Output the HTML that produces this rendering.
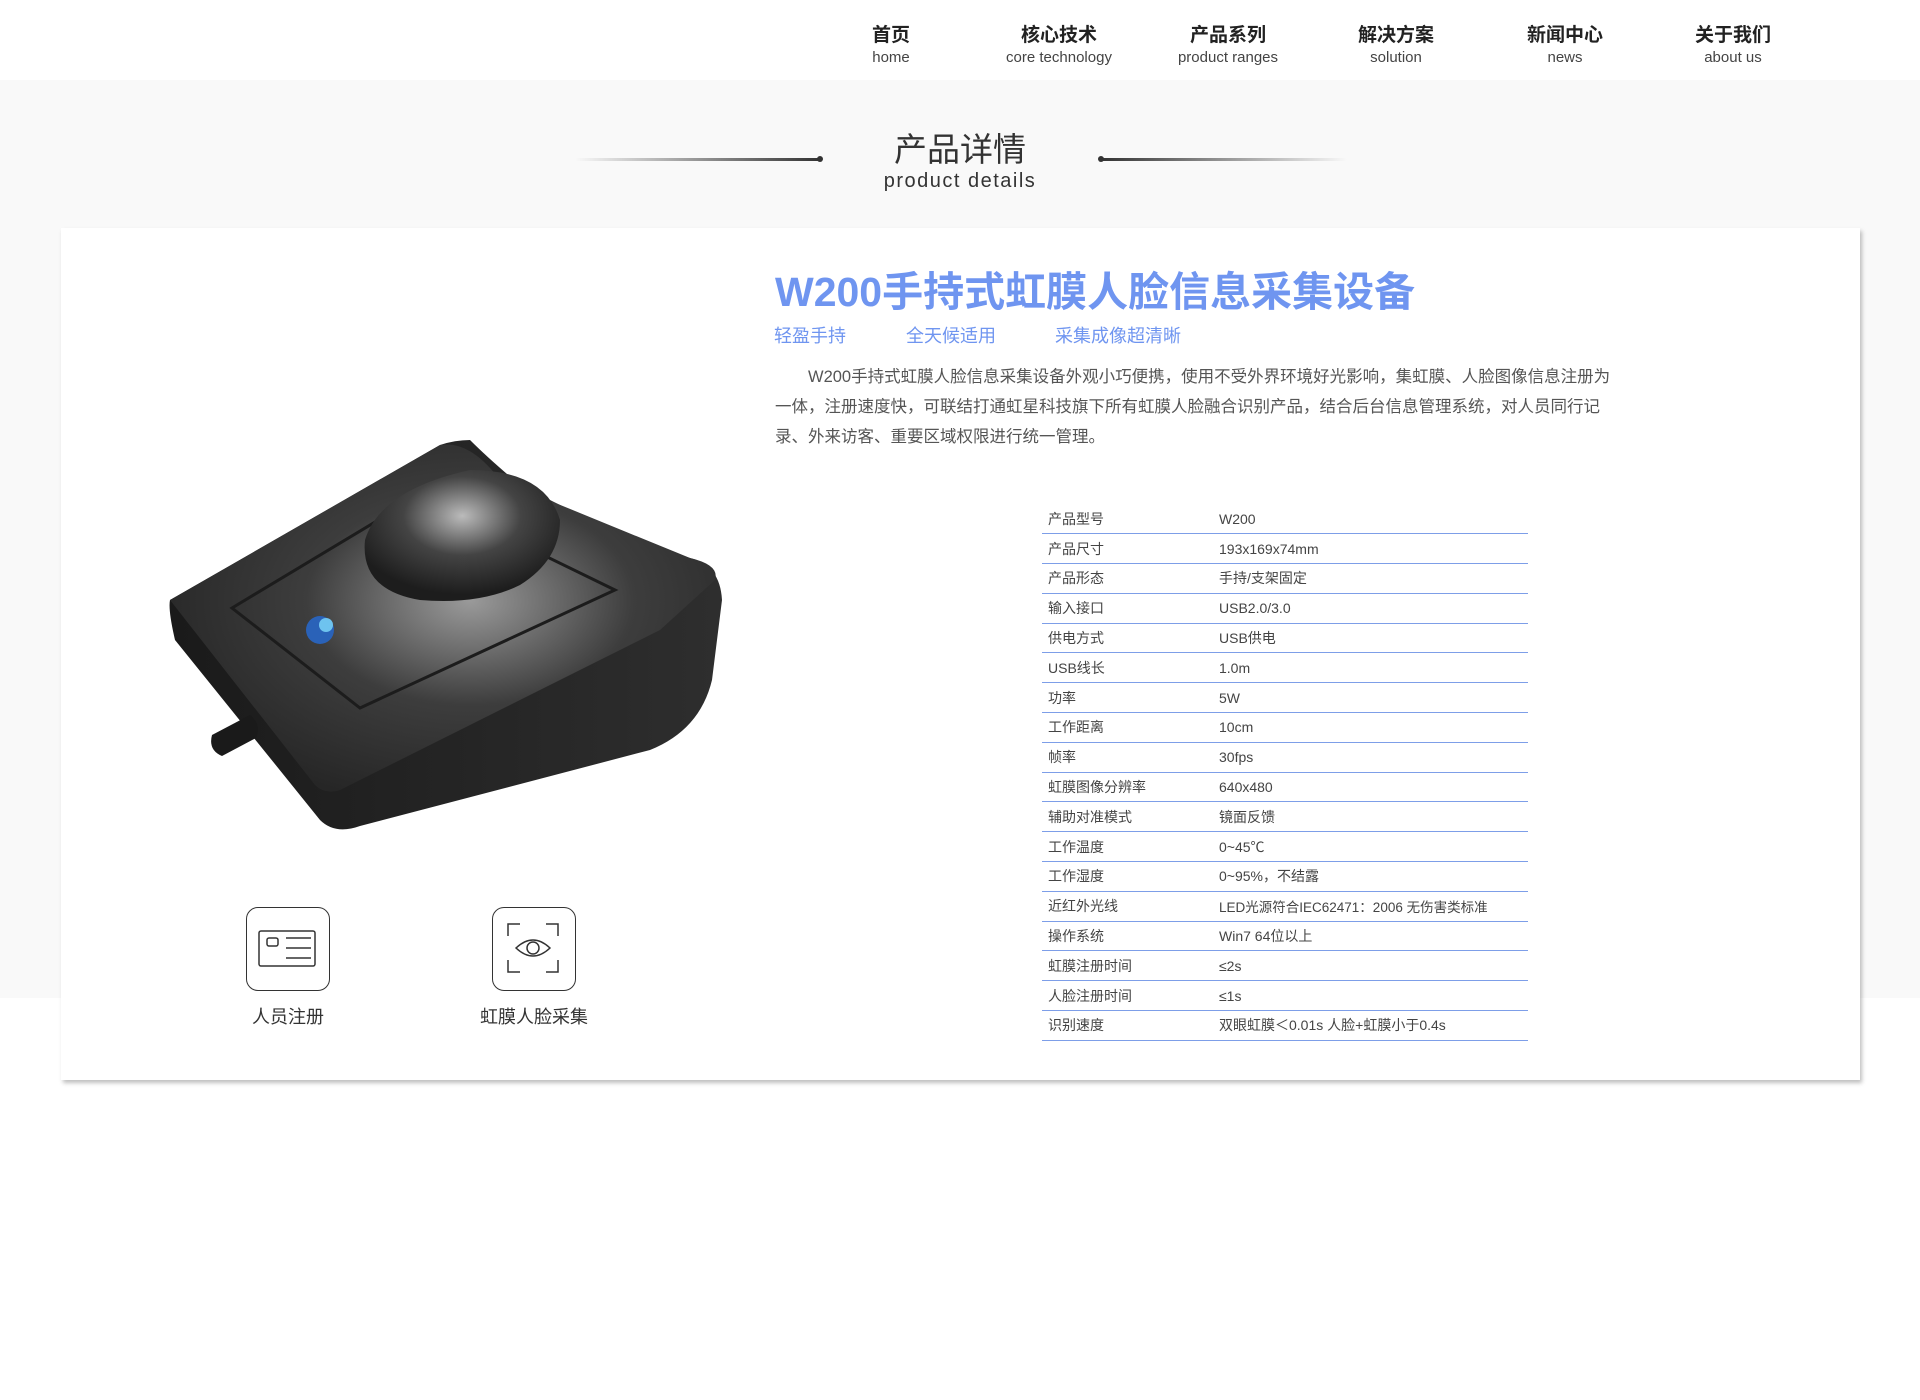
<!DOCTYPE html>
<html><head><meta charset="utf-8">
<style>
*{margin:0;padding:0;box-sizing:border-box}
body{width:1920px;height:1400px;background:#fff;font-family:"Liberation Sans","Noto Sans CJK SC",sans-serif;position:relative;overflow:hidden;color:#333}
.hdr{position:absolute;left:0;top:0;width:1920px;height:80px;background:#fff}
.nav{position:absolute;top:25px;width:170px;margin-left:-85px;text-align:center}
.nav b{display:block;font-size:19px;color:#222;line-height:22px}
.nav span{display:block;font-size:15px;color:#444;line-height:21px}
.gray{position:absolute;left:0;top:80px;width:1920px;height:918px;background:#f9f9f9}
.ttl{position:absolute;left:0;width:1920px;text-align:center;color:#333}
.line{position:absolute;height:3px;top:158px}
.dot{position:absolute;width:6px;height:6px;border-radius:3px;background:#333;top:156px}
.card{position:absolute;left:61px;top:228px;width:1799px;height:852px;background:#fff;box-shadow:2px 3px 4px rgba(0,0,0,.25)}
.pt{position:absolute;left:775px;top:258px;font-size:41px;font-weight:bold;color:#6f95f0;white-space:nowrap}
.sub{position:absolute;top:322px;font-size:18px;color:#6f95f0}
.para{position:absolute;left:775px;top:362px;width:836px;font-size:16.5px;line-height:30px;color:#555;text-indent:33px}
table{position:absolute;left:1042px;top:504px;width:486px;border-collapse:collapse;font-size:14px;color:#444}
td{height:29.8px;border-bottom:1.5px solid #7d9ee8;padding:0 0 0 6px;vertical-align:middle}
td.l{width:171px}
.ib{position:absolute;top:907px;width:84px;height:84px;border:1.6px solid #333;border-radius:12px}
.il{position:absolute;top:1003px;font-size:18px;color:#333;width:200px;margin-left:-100px;text-align:center}
</style></head><body>
<div class="hdr"></div>
<div class="nav" style="left:891px"><b>首页</b><span>home</span></div>
<div class="nav" style="left:1059px"><b>核心技术</b><span>core technology</span></div>
<div class="nav" style="left:1228px"><b>产品系列</b><span>product ranges</span></div>
<div class="nav" style="left:1396px"><b>解决方案</b><span>solution</span></div>
<div class="nav" style="left:1565px"><b>新闻中心</b><span>news</span></div>
<div class="nav" style="left:1733px"><b>关于我们</b><span>about us</span></div>
<div class="gray"></div>
<div class="ttl" style="top:130px;font-size:33px;line-height:40px">产品详情</div>
<div class="ttl" style="top:170px;font-size:20px;letter-spacing:1.5px">product details</div>
<div class="line" style="left:575px;width:245px;background:linear-gradient(90deg,rgba(51,51,51,0),#333)"></div>
<div class="dot" style="left:817px"></div>
<div class="dot" style="left:1098px"></div>
<div class="line" style="left:1101px;width:246px;background:linear-gradient(90deg,#333,rgba(51,51,51,0))"></div>
<div class="card"></div>
<svg style="position:absolute;left:0;top:0" width="1920" height="1400">
<defs>
<radialGradient id="g1" cx="0.55" cy="0.45" r="0.6"><stop offset="0" stop-color="#9a9a9a"/><stop offset="0.5" stop-color="#3d3d3d"/><stop offset="1" stop-color="#262626"/></radialGradient>
<linearGradient id="g2" x1="0" y1="0" x2="1" y2="0"><stop offset="0" stop-color="#1a1a1a"/><stop offset="1" stop-color="#2e2e2e"/></linearGradient>
<radialGradient id="g3" cx="0.5" cy="0.35" r="0.6"><stop offset="0" stop-color="#bbb"/><stop offset="0.5" stop-color="#444"/><stop offset="1" stop-color="#1d1d1d"/></radialGradient>
</defs>
<path d="M170 600 Q168 610 175 640 L320 820 Q335 835 360 826 L650 750 Q700 730 712 680 L722 600 Q720 565 690 558 L610 530 Q560 505 520 485 Q490 460 470 440 Q455 440 440 445 Z" fill="url(#g2)"/>
<path d="M170 600 L440 445 Q470 440 500 480 Q560 505 690 558 Q720 565 715 580 L660 630 L340 790 Q325 795 315 785 Z" fill="url(#g1)"/>
<path d="M232 608 L420 495 L615 590 L360 708 Z" fill="none" stroke="#1c1c1c" stroke-width="3"/>
<path d="M365 540 Q380 490 470 470 Q545 470 560 520 Q560 560 520 585 Q480 605 420 600 Q360 590 365 540Z" fill="url(#g3)"/>
<circle cx="320" cy="630" r="14" fill="#2a62b8"/><circle cx="326" cy="625" r="7" fill="#6ec3ef"/>
<path d="M212 735 L250 715 Q262 725 256 738 L222 756 Q208 750 212 735Z" fill="#1a1a1a"/>
</svg>
<div class="pt">W200手持式虹膜人脸信息采集设备</div>
<div class="sub" style="left:774px">轻盈手持</div>
<div class="sub" style="left:906px">全天候适用</div>
<div class="sub" style="left:1055px">采集成像超清晰</div>
<div class="para">W200手持式虹膜人脸信息采集设备外观小巧便携，使用不受外界环境好光影响，集虹膜、人脸图像信息注册为一体，注册速度快，可联结打通虹星科技旗下所有虹膜人脸融合识别产品，结合后台信息管理系统，对人员同行记录、外来访客、重要区域权限进行统一管理。</div>
<table>
<tr><td class="l">产品型号</td><td>W200</td></tr>
<tr><td class="l">产品尺寸</td><td>193x169x74mm</td></tr>
<tr><td class="l">产品形态</td><td>手持/支架固定</td></tr>
<tr><td class="l">输入接口</td><td>USB2.0/3.0</td></tr>
<tr><td class="l">供电方式</td><td>USB供电</td></tr>
<tr><td class="l">USB线长</td><td>1.0m</td></tr>
<tr><td class="l">功率</td><td>5W</td></tr>
<tr><td class="l">工作距离</td><td>10cm</td></tr>
<tr><td class="l">帧率</td><td>30fps</td></tr>
<tr><td class="l">虹膜图像分辨率</td><td>640x480</td></tr>
<tr><td class="l">辅助对准模式</td><td>镜面反馈</td></tr>
<tr><td class="l">工作温度</td><td>0~45℃</td></tr>
<tr><td class="l">工作湿度</td><td>0~95%，不结露</td></tr>
<tr><td class="l">近红外光线</td><td style="font-size:13.5px">LED光源符合IEC62471：2006 无伤害类标准</td></tr>
<tr><td class="l">操作系统</td><td>Win7 64位以上</td></tr>
<tr><td class="l">虹膜注册时间</td><td>≤2s</td></tr>
<tr><td class="l">人脸注册时间</td><td>≤1s</td></tr>
<tr><td class="l">识别速度</td><td>双眼虹膜＜0.01s 人脸+虹膜小于0.4s</td></tr>
</table>
<div class="ib" style="left:246px"><svg width="84" height="84" style="position:absolute;left:-1.6px;top:-1.6px"><g fill="none" stroke="#333" stroke-width="1.5"><rect x="14" y="25" width="56" height="35" rx="2"/><rect x="22" y="32" width="11" height="8" rx="2"/><path d="M41 32H66M41 42H66M41 52H66"/></g></svg></div>
<div class="ib" style="left:492px"><svg width="84" height="84" style="position:absolute;left:-1.6px;top:-1.6px"><g fill="none" stroke="#333" stroke-width="1.5"><path d="M17 30V18H29M55 18H67V30M17 54V66H29M55 66H67V54"/><path d="M25 42Q42 26 59 42Q42 58 25 42Z"/><circle cx="42" cy="42" r="6"/></g></svg></div>
<div class="il" style="left:288px">人员注册</div>
<div class="il" style="left:534px">虹膜人脸采集</div>
</body></html>
